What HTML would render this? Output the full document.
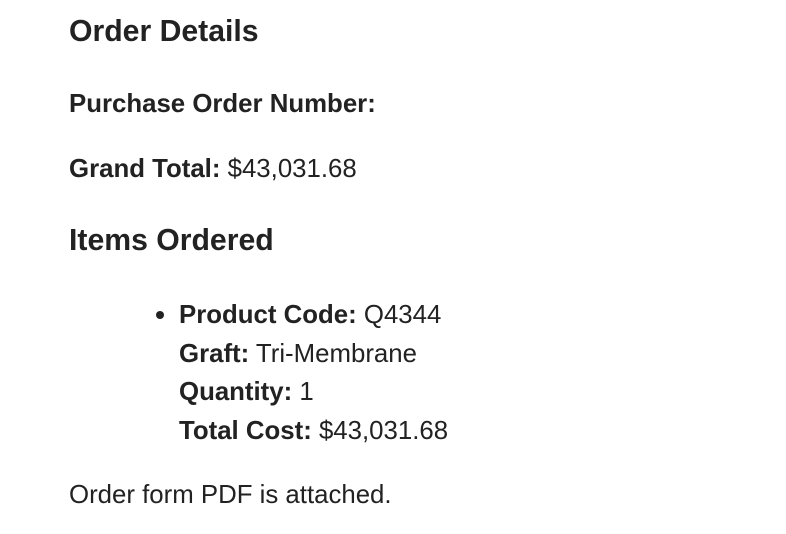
<!DOCTYPE html>
<html><head><meta charset="utf-8"><style>
html,body{margin:0;padding:0;background:#fff;width:786px;height:534px;overflow:hidden}
body{font-family:"Liberation Sans",Arial,sans-serif;color:#222;font-size:25.8px;position:relative}
.l{position:absolute;left:69px;line-height:38px;white-space:nowrap}
.h{font-size:30.2px;font-weight:bold;line-height:38px}
b{font-weight:bold}
.li{left:179px}
.dot{position:absolute;left:156px;width:8px;height:8px;border-radius:50%;background:#222}
</style></head><body>
<div class="l h" style="top:13px">Order Details</div>
<div class="l" style="top:85px"><b>Purchase Order Number:</b></div>
<div class="l" style="top:150px"><b>Grand Total:</b> $43,031.68</div>
<div class="l h" style="top:222px">Items Ordered</div>
<div class="dot" style="top:311px"></div>
<div class="l li" style="top:296px"><b>Product Code:</b> Q4344</div>
<div class="l li" style="top:335px"><b>Graft:</b> Tri-Membrane</div>
<div class="l li" style="top:373px"><b>Quantity:</b> 1</div>
<div class="l li" style="top:412px"><b>Total Cost:</b> $43,031.68</div>
<div class="l" style="top:476px">Order form PDF is attached.</div>
</body></html>
